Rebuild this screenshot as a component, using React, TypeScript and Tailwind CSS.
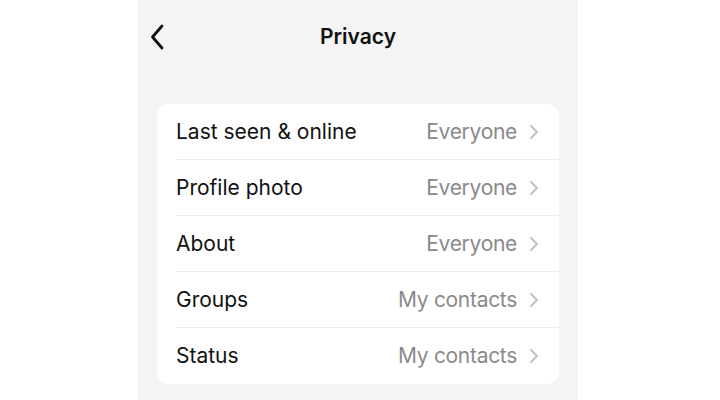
import React from "react";

const rows = [
  { label: "Last seen & online", value: "Everyone" },
  { label: "Profile photo", value: "Everyone" },
  { label: "About", value: "Everyone" },
  { label: "Groups", value: "My contacts" },
  { label: "Status", value: "My contacts" },
];

export default function App() {
  return (
    <div className="w-[720px] h-[400px] bg-white flex overflow-hidden" style={{ fontFamily: "Inter, 'Noto Sans', sans-serif" }}>
      <div className="ml-[138px] w-[440px] h-[400px] bg-[#f4f4f4] flex flex-col">
        <div className="relative h-[74px] flex items-center justify-center">
          <svg className="absolute left-[12px] top-[24px]" width="16" height="26" viewBox="0 0 16 26" fill="none">
            <path d="M12 2 L2.5 13 L12 24" stroke="#111" strokeWidth="2.8" strokeLinecap="round" strokeLinejoin="round" />
          </svg>
          <span className="text-[21px] font-semibold text-[#111]">Privacy</span>
        </div>
        <div className="mt-[30px] mx-[19px] bg-white rounded-[12px] overflow-hidden">
          {rows.map((r, i) => (
            <div key={r.label} className="pl-[19px]">
              <div className={`h-[56px] flex items-center pr-[20px] ${i < rows.length - 1 ? "border-b border-[#ececec]" : ""}`}>
                <span className="flex-1 text-[21px] text-[#111]">{r.label}</span>
                <span className="text-[21px] text-[#8a8a8a] tracking-[-0.3px]">{r.value}</span>
                <svg className="ml-[12px]" width="10" height="16" viewBox="0 0 10 16" fill="none">
                  <path d="M2 2 L8 8 L2 14" stroke="#c2c2c2" strokeWidth="2" strokeLinecap="round" strokeLinejoin="round" />
                </svg>
              </div>
            </div>
          ))}
        </div>
      </div>
    </div>
  );
}
